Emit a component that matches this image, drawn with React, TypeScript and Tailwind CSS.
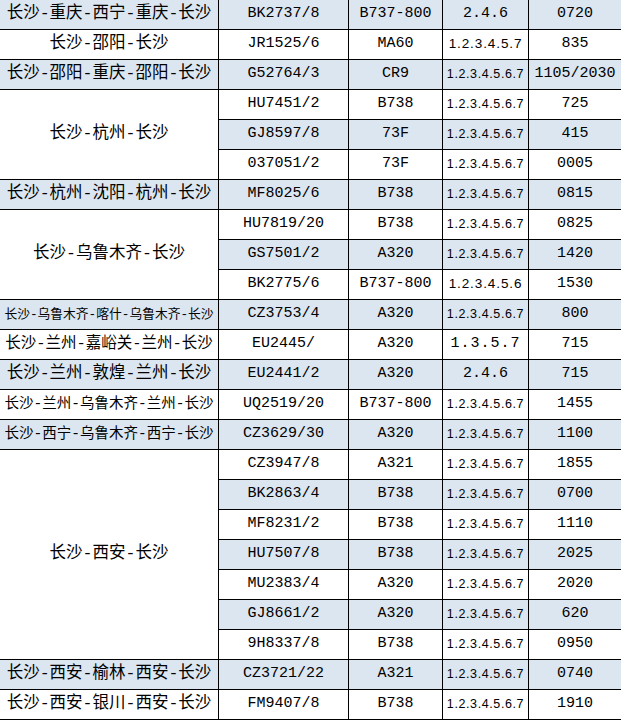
import React from 'react';

type Flight = {
  code: string;
  plane: string;
  days: string;
  time: string;
  blue: boolean;
};

type RouteSize = 'xs' | 'sm' | 'md';

type Group = {
  route: string;
  size?: RouteSize;
  flights: Flight[];
};

const groups: Group[] = [
  { route: '长沙-重庆-西宁-重庆-长沙', flights: [{ code: 'BK2737/8', plane: 'B737-800', days: '2.4.6', time: '0720', blue: true }] },
  { route: '长沙-邵阳-长沙', flights: [{ code: 'JR1525/6', plane: 'MA60', days: '1.2.3.4.5.7', time: '835', blue: false }] },
  { route: '长沙-邵阳-重庆-邵阳-长沙', flights: [{ code: 'G52764/3', plane: 'CR9', days: '1.2.3.4.5.6.7', time: '1105/2030', blue: true }] },
  {
    route: '长沙-杭州-长沙',
    flights: [
      { code: 'HU7451/2', plane: 'B738', days: '1.2.3.4.5.6.7', time: '725', blue: false },
      { code: 'GJ8597/8', plane: '73F', days: '1.2.3.4.5.6.7', time: '415', blue: true },
      { code: '037051/2', plane: '73F', days: '1.2.3.4.5.6.7', time: '0005', blue: false },
    ],
  },
  { route: '长沙-杭州-沈阳-杭州-长沙', flights: [{ code: 'MF8025/6', plane: 'B738', days: '1.2.3.4.5.6.7', time: '0815', blue: true }] },
  {
    route: '长沙-乌鲁木齐-长沙',
    flights: [
      { code: 'HU7819/20', plane: 'B738', days: '1.2.3.4.5.6.7', time: '0825', blue: false },
      { code: 'GS7501/2', plane: 'A320', days: '1.2.3.4.5.6.7', time: '1420', blue: true },
      { code: 'BK2775/6', plane: 'B737-800', days: '1.2.3.4.5.6', time: '1530', blue: false },
    ],
  },
  { route: '长沙-乌鲁木齐-喀什-乌鲁木齐-长沙', size: 'xs', flights: [{ code: 'CZ3753/4', plane: 'A320', days: '1.2.3.4.5.6.7', time: '800', blue: true }] },
  { route: '长沙-兰州-嘉峪关-兰州-长沙', size: 'md', flights: [{ code: 'EU2445/', plane: 'A320', days: '1.3.5.7', time: '715', blue: false }] },
  { route: '长沙-兰州-敦煌-兰州-长沙', flights: [{ code: 'EU2441/2', plane: 'A320', days: '2.4.6', time: '715', blue: true }] },
  { route: '长沙-兰州-乌鲁木齐-兰州-长沙', size: 'sm', flights: [{ code: 'UQ2519/20', plane: 'B737-800', days: '1.2.3.4.5.6.7', time: '1455', blue: false }] },
  { route: '长沙-西宁-乌鲁木齐-西宁-长沙', size: 'sm', flights: [{ code: 'CZ3629/30', plane: 'A320', days: '1.2.3.4.5.6.7', time: '1100', blue: true }] },
  {
    route: '长沙-西安-长沙',
    flights: [
      { code: 'CZ3947/8', plane: 'A321', days: '1.2.3.4.5.6.7', time: '1855', blue: false },
      { code: 'BK2863/4', plane: 'B738', days: '1.2.3.4.5.6.7', time: '0700', blue: true },
      { code: 'MF8231/2', plane: 'B738', days: '1.2.3.4.5.6.7', time: '1110', blue: false },
      { code: 'HU7507/8', plane: 'B738', days: '1.2.3.4.5.6.7', time: '2025', blue: true },
      { code: 'MU2383/4', plane: 'A320', days: '1.2.3.4.5.6.7', time: '2020', blue: false },
      { code: 'GJ8661/2', plane: 'A320', days: '1.2.3.4.5.6.7', time: '620', blue: true },
      { code: '9H8337/8', plane: 'B738', days: '1.2.3.4.5.6.7', time: '0950', blue: false },
    ],
  },
  { route: '长沙-西安-榆林-西安-长沙', flights: [{ code: 'CZ3721/22', plane: 'A321', days: '1.2.3.4.5.6.7', time: '0740', blue: true }] },
  { route: '长沙-西安-银川-西安-长沙', flights: [{ code: 'FM9407/8', plane: 'B738', days: '1.2.3.4.5.6.7', time: '1910', blue: false }] },
];

const spans: Record<number, string> = {
  1: 'row-span-1',
  3: 'row-span-3',
  7: 'row-span-7',
};

// long routes are shrunk to fit the column, like the sheet does
function routeClass(size?: RouteSize) {
  if (size === 'xs') return 'text-[12.75px]';
  if (size === 'sm') return 'text-[14.5px]';
  if (size === 'md') return 'text-[15.5px]';
  return 'text-[16.5px]';
}

function daysClass(days: string) {
  if (days.length >= 13) return "font-['Liberation_Sans'] text-[12.5px] tracking-[0.6px]";
  if (days.length === 11) return "font-['Liberation_Sans'] text-[13.5px] tracking-[0.9px]";
  if (days.length === 7) return 'text-[15px] tracking-[1px]';
  return 'text-[15px]';
}

export default function App() {
  return (
    <main className="w-[621px] h-[720px] overflow-hidden bg-white">
      <div className="grid grid-cols-[218px_129px_93px_85px_1fr] auto-rows-[29px] gap-px bg-black pb-px text-black font-['Liberation_Mono','Noto_Sans_CJK_SC',monospace]">
        {groups.map((g, gi) => (
          <React.Fragment key={gi}>
            <div
              className={`${spans[g.flights.length]} flex items-center justify-center whitespace-nowrap ${routeClass(g.size)} ${
                g.flights.length === 1 && g.flights[0].blue ? 'bg-[#dce6f1]' : 'bg-white'
              }`}
            >
              {g.route}
            </div>
            {g.flights.map((f, fi) => {
              const bg = f.blue ? 'bg-[#dce6f1]' : 'bg-white';
              return (
                <React.Fragment key={fi}>
                  <div className={`${bg} flex items-center justify-center text-[15px]`}>{f.code}</div>
                  <div className={`${bg} flex items-center justify-center text-[15px]`}>{f.plane}</div>
                  <div className={`${bg} flex items-center justify-center whitespace-nowrap ${daysClass(f.days)}`}>{f.days}</div>
                  <div className={`${bg} flex items-center justify-center text-[15px]`}>{f.time}</div>
                </React.Fragment>
              );
            })}
          </React.Fragment>
        ))}
      </div>
    </main>
  );
}
